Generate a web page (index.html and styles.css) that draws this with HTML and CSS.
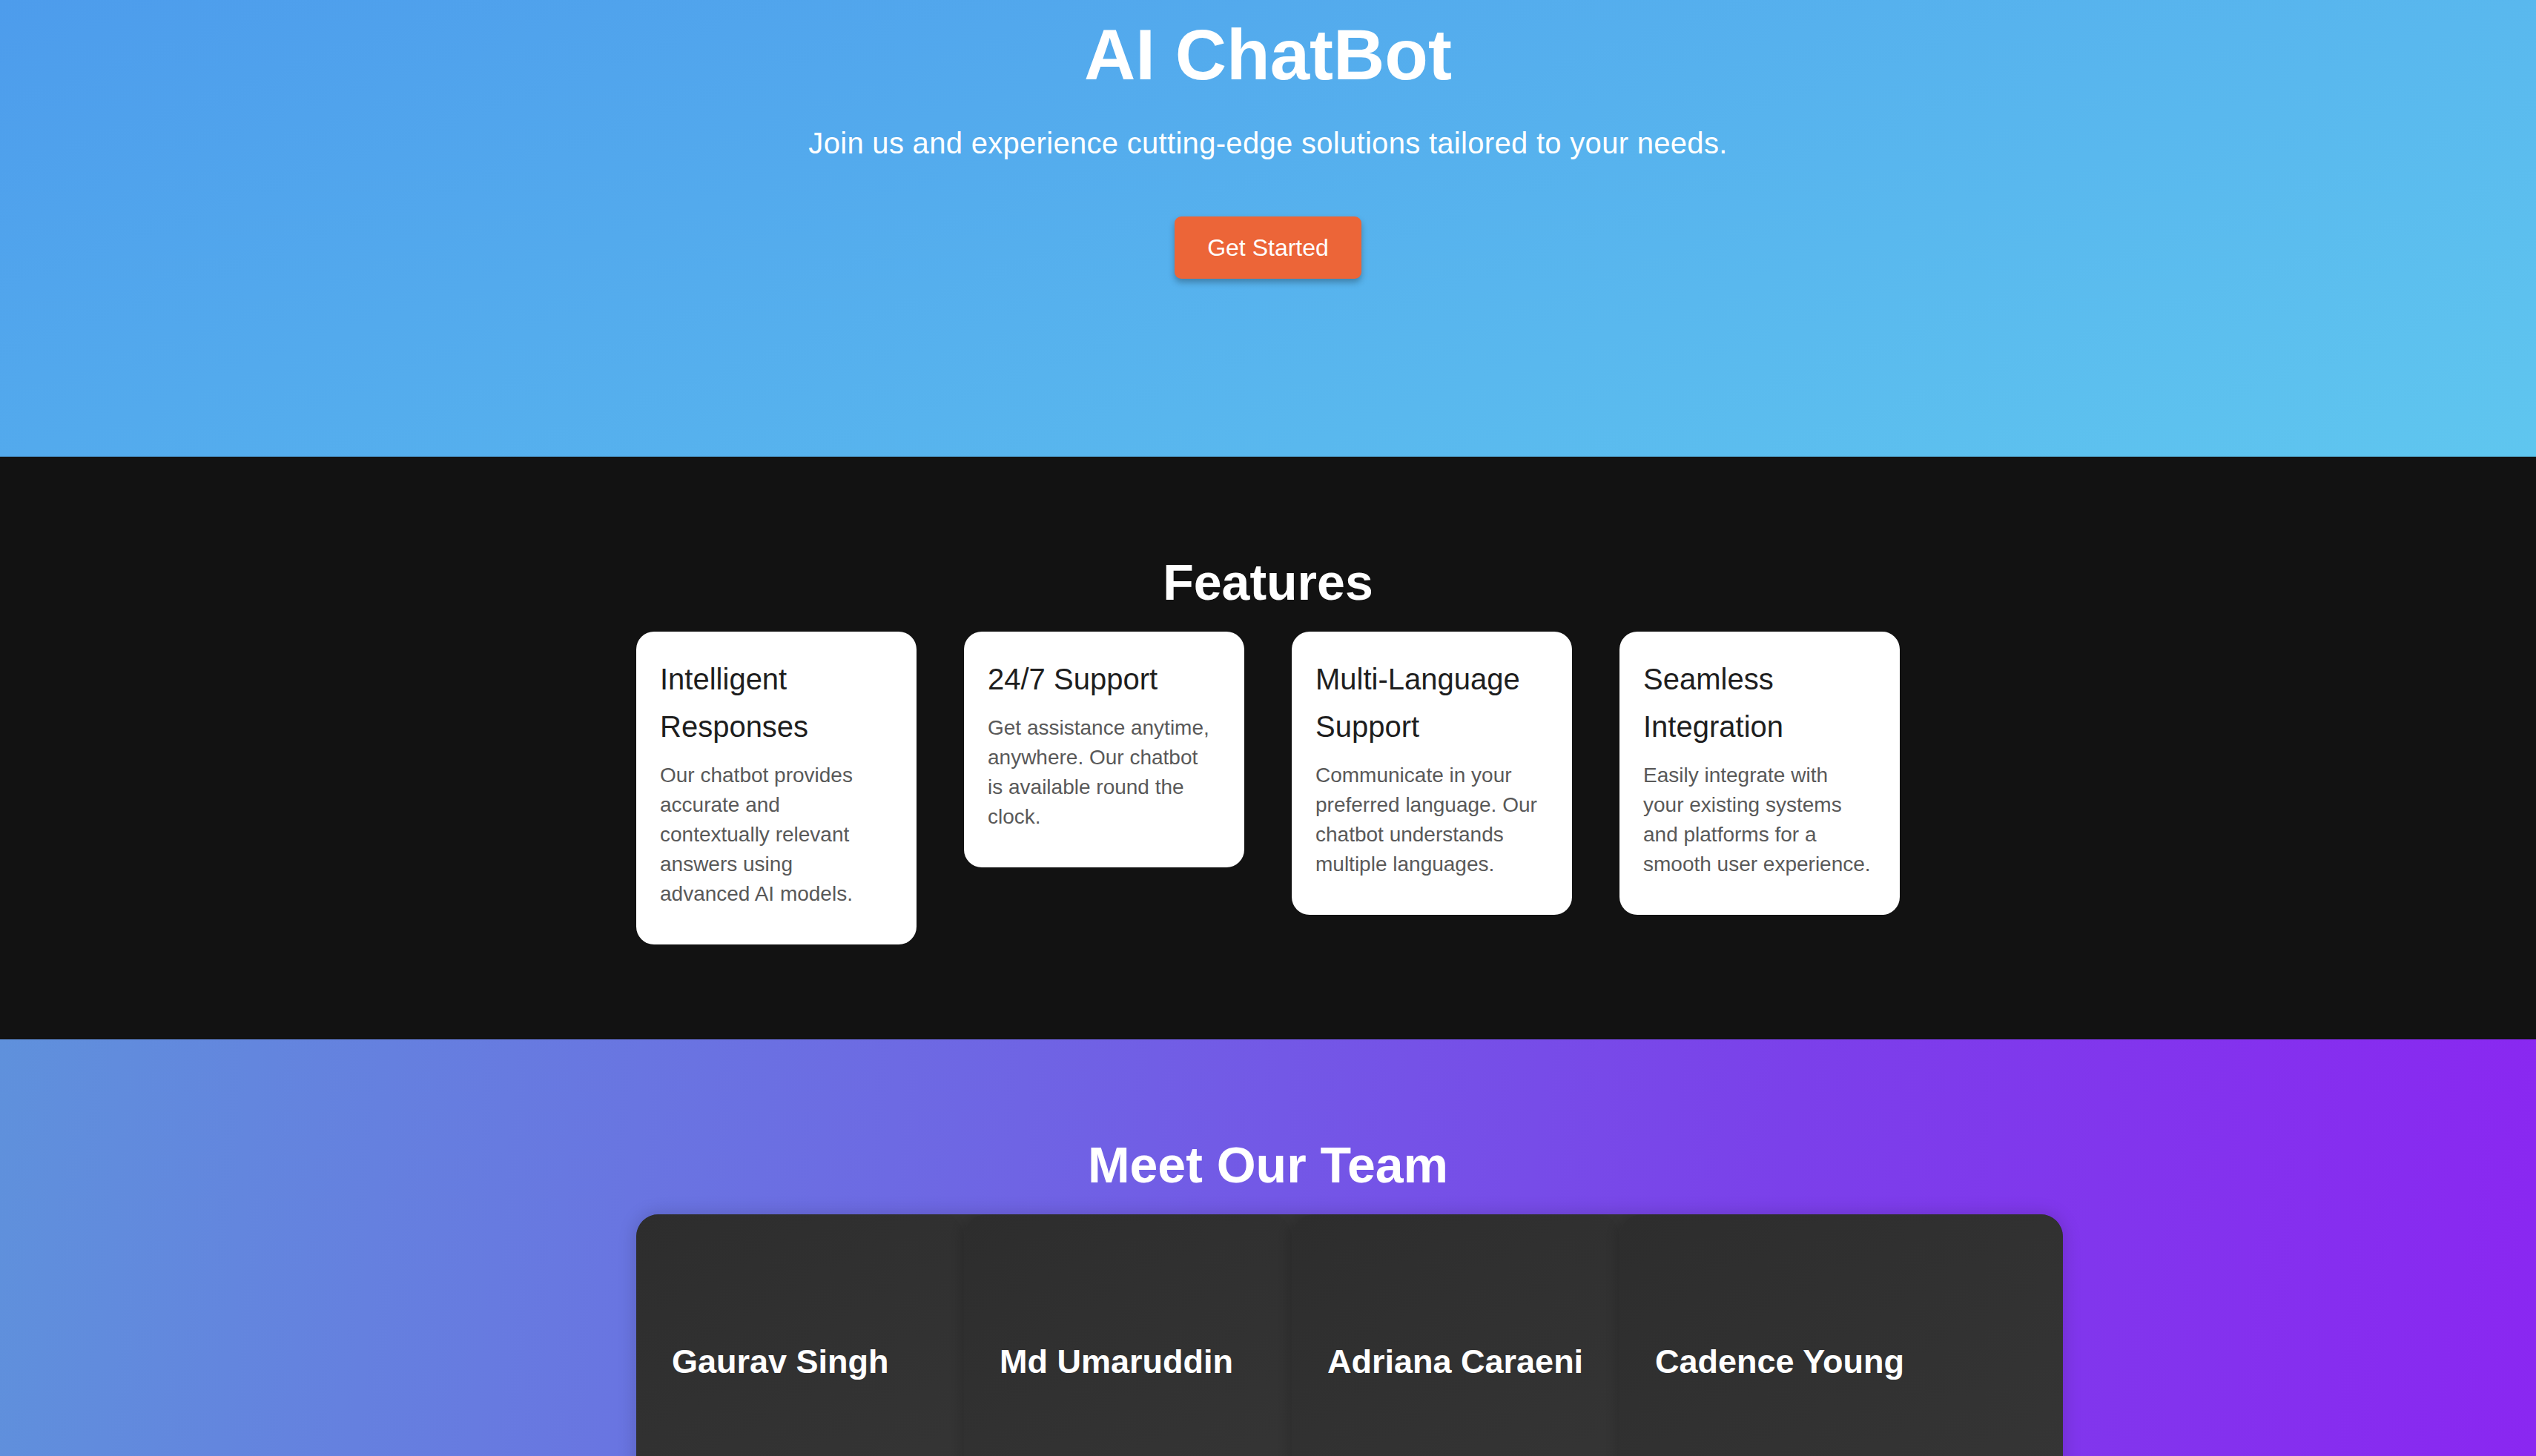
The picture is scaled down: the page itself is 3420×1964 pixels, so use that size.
FILE: index.html
```html
<!DOCTYPE html>
<html lang="en">
<head>
<meta charset="utf-8">
<title>AI ChatBot</title>
<link rel="stylesheet" href="styles.css">
</head>
<body>
<section class="hero">
  <h1 class="hero-title">AI ChatBot</h1>
  <p class="hero-sub">Join us and experience cutting-edge solutions tailored to your needs.</p>
  <button class="cta">Get Started</button>
</section>

<section class="features">
  <h2 class="section-title">Features</h2>
  <div class="wrap feature-row">
    <div class="feature-card">
      <h3 class="feature-title">Intelligent Responses</h3>
      <p class="feature-text">Our chatbot provides accurate and contextually relevant answers using advanced AI models.</p>
    </div>
    <div class="feature-card">
      <h3 class="feature-title">24/7 Support</h3>
      <p class="feature-text">Get assistance anytime, anywhere. Our chatbot is available round the clock.</p>
    </div>
    <div class="feature-card">
      <h3 class="feature-title">Multi-Language Support</h3>
      <p class="feature-text">Communicate in your preferred language. Our chatbot understands multiple languages.</p>
    </div>
    <div class="feature-card">
      <h3 class="feature-title">Seamless Integration</h3>
      <p class="feature-text">Easily integrate with your existing systems and platforms for a smooth user experience.</p>
    </div>
  </div>
</section>

<section class="team">
  <h2 class="section-title">Meet Our Team</h2>
  <div class="wrap">
    <div class="team-track">
      <div class="member"><h3 class="member-name">Gaurav Singh</h3></div>
      <div class="member"><h3 class="member-name">Md Umaruddin</h3></div>
      <div class="member"><h3 class="member-name">Adriana Caraeni</h3></div>
      <div class="member member-last"><h3 class="member-name">Cadence Young</h3></div>
    </div>
  </div>
</section>
</body>
</html>
```

FILE: styles.css
```css
* { box-sizing: border-box; }

html, body {
  margin: 0;
  padding: 0;
}

body {
  font-family: "Liberation Sans", Arial, Helvetica, sans-serif;
  background: #121212;
  color: #fff;
  overflow-x: hidden;
}

.hero {
  background: linear-gradient(160deg, #4d9cec 0%, #5fc6ef 100%);
  text-align: center;
  padding: 19px 0 240px;
}

.hero-title {
  margin: 0;
  font-size: 96px;
  font-weight: 700;
  line-height: 110px;
}

.hero-sub {
  margin: 41px 0 0;
  font-size: 40px;
  line-height: 46px;
  letter-spacing: 0.3px;
}

.cta {
  display: block;
  margin: 76px auto 0;
  height: 84px;
  padding: 0 44px;
  border: none;
  border-radius: 9px;
  background: #ec6538;
  color: #fff;
  font-family: "Liberation Sans", Arial, sans-serif;
  font-size: 32px;
  box-shadow: 0 5px 9px rgba(0, 0, 0, 0.28);
  cursor: pointer;
}

.section-title {
  margin: 0 0 28px;
  text-align: center;
  font-size: 68px;
  font-weight: 700;
  line-height: 78px;
  color: #fff;
}

.features {
  background: #121212;
  padding: 130px 0 128px;
}

.wrap {
  width: 1704px;
  margin: 0 auto;
}

.feature-row {
  display: flex;
  gap: 64px;
  align-items: flex-start;
}

.feature-card {
  flex: 0 0 378px;
  background: #fff;
  border-radius: 24px;
  padding: 32px 38.5px 31px 32px;
}

.feature-title {
  margin: 0 0 14px;
  font-size: 40px;
  font-weight: 400;
  line-height: 64px;
  color: #1e1e1e;
}

.feature-text {
  margin: 0 0 17px;
  font-size: 28px;
  line-height: 40px;
  color: #595959;
}

.team {
  background: linear-gradient(95deg, #5f91dc 0%, #6d6ae3 35%, #7b40ea 70%, #8a27f1 100%);
  padding: 130px 0 0;
  height: 562px;
  overflow: hidden;
}

.team-track {
  width: 1924px;
  display: flex;
  background: #333;
  border-radius: 30px 30px 0 0;
  box-shadow: 0 0 24px rgba(0, 0, 0, 0.18);
  overflow: hidden;
}

.member {
  flex: 0 0 442px;
  min-height: 520px;
  border-radius: 30px;
  background: linear-gradient(150deg, #2d2d2d 0%, #373737 100%);
  box-shadow: -6px 0 14px rgba(0, 0, 0, 0.12);
  padding: 173px 48px 0;
}

.member-last {
  flex: 1 1 auto;
}

.member-name {
  margin: 0;
  font-size: 45px;
  font-weight: 700;
  line-height: 52px;
  color: #fff;
}
```
